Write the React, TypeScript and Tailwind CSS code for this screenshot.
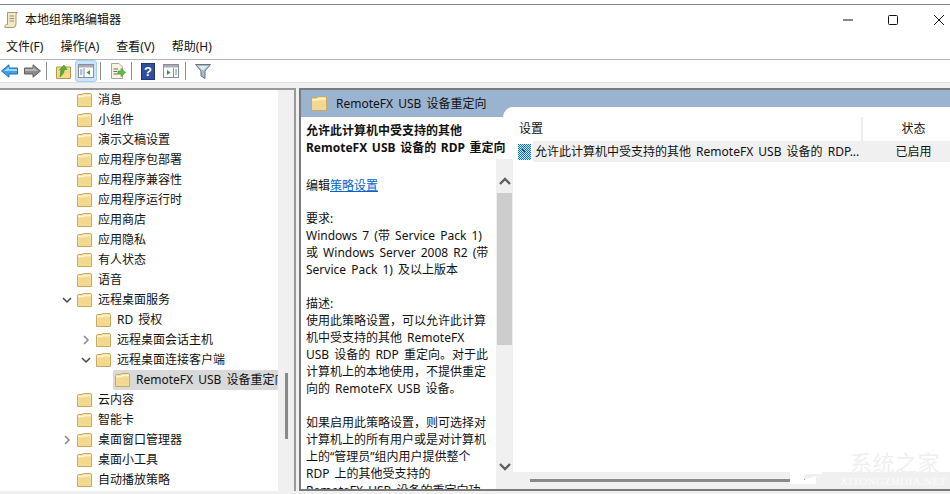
import React from "react";

const font = { fontFamily: '"Noto Sans", "Noto Sans CJK SC", sans-serif' };

function Folder({ className = "w-[15px] h-[14px]" }: { className?: string }) {
  return (
    <svg viewBox="0 0 15 14" className={"shrink-0 " + className}>
      <path d="M0.5 2.5 Q0.5 1.5 1.5 1.5 H5 L6.5 0.5 H13 Q14.5 0.5 14.5 2 V13.5 H0.5 Z" fill="#f5dd98" stroke="#c8a963" />
      <path d="M1 3.5 H6 L7.5 2.5 H14" fill="none" stroke="#fff6d6" strokeWidth="1.4" />
      <path d="M2 13 V5 H13 V13 Z" fill="#f3d88e" />
    </svg>
  );
}

function Chevron({ dir, color = "#555" }: { dir: "down" | "right"; color?: string }) {
  return (
    <svg viewBox="0 0 10 10" className="w-[10px] h-[10px]">
      <path
        d={dir === "down" ? "M1 3 L5 7 L9 3" : "M3 1 L7 5 L3 9"}
        fill="none"
        stroke={color}
        strokeWidth="1.5"
      />
    </svg>
  );
}

type Row = { t: string; indent: 0 | 1 | 2; chev?: "down" | "right"; sel?: boolean };
const rows: Row[] = [
  { t: "消息", indent: 0 },
  { t: "小组件", indent: 0 },
  { t: "演示文稿设置", indent: 0 },
  { t: "应用程序包部署", indent: 0 },
  { t: "应用程序兼容性", indent: 0 },
  { t: "应用程序运行时", indent: 0 },
  { t: "应用商店", indent: 0 },
  { t: "应用隐私", indent: 0 },
  { t: "有人状态", indent: 0 },
  { t: "语音", indent: 0 },
  { t: "远程桌面服务", indent: 0, chev: "down" },
  { t: "RD 授权", indent: 1 },
  { t: "远程桌面会话主机", indent: 1, chev: "right" },
  { t: "远程桌面连接客户端", indent: 1, chev: "down" },
  { t: "RemoteFX USB 设备重定向", indent: 2, sel: true },
  { t: "云内容", indent: 0 },
  { t: "智能卡", indent: 0 },
  { t: "桌面窗口管理器", indent: 0, chev: "right" },
  { t: "桌面小工具", indent: 0 },
  { t: "自动播放策略", indent: 0 },
];

const indentClass = { 0: "w-[58px]", 1: "w-[77px]", 2: "w-[96px]" };

function Sep() {
  return <div className="w-px h-[18px] bg-[#8e8e8e]" />;
}

function WindowIcon({ kind }: { kind: "tree" | "action" }) {
  return (
    <svg viewBox="0 0 16 14" className="w-[16px] h-[14px]">
      <rect x="0.5" y="0.5" width="15" height="13" fill="#fff" stroke="#8a8f96" />
      <rect x="1" y="1" width="14" height="2.5" fill="#a9adb3" />
      {kind === "tree" ? (
        <>
          <path d="M6 4 V13" stroke="#8a8f96" />
          <path d="M2 6 H4.5 M2 8 H4.5 M2 10 H4.5" stroke="#5a8ac0" />
          <path d="M12 6 L8.5 8.5 L12 11 Z" fill="#2f9e44" />
        </>
      ) : (
        <>
          <path d="M10.5 4 V13" stroke="#8a8f96" />
          <path d="M12 6 H14 M12 8 H14 M12 10 H14" stroke="#5a8ac0" />
          <path d="M4 6 L7.5 8.5 L4 11 Z" fill="#2f9e44" />
        </>
      )}
    </svg>
  );
}

function Toolbar() {
  return (
    <div className="h-[22px] flex items-center shrink-0 pl-[1px]">
      <svg viewBox="0 0 17 14" className="w-[17px] h-[14px]">
        <path d="M0.5 7 L8 0.8 V4 H16.5 V10 H8 V13.2 Z" fill="#3fa0ea" stroke="#1f6fb8" strokeLinejoin="round" />
        <path d="M3 7 L8 3 V5 H16 V7 Z" fill="#9fd6fb" />
      </svg>
      <svg viewBox="0 0 17 14" className="w-[17px] h-[14px] ml-[6px]">
        <path d="M16.5 7 L9 0.8 V4 H0.5 V10 H9 V13.2 Z" fill="#8a8a8a" stroke="#5f5f5f" strokeLinejoin="round" />
        <path d="M14 7 L9 3 V5 H1 V7 Z" fill="#b5b5b5" />
      </svg>
      <div className="ml-[5px]"><Sep /></div>
      <svg viewBox="0 0 15 15" className="w-[15px] h-[15px] ml-[9px]">
        <path d="M0.5 3 H14.5 V14.5 H0.5 Z" fill="#f3d88e" stroke="#b8974f" />
        <path d="M4 13 L5 6 L3.5 6 L8 1 L11 5.5 L8.5 5.5 L7.5 9 Z" fill="#55b233" stroke="#2f7d1a" strokeWidth="0.5" />
      </svg>
      <div className="ml-[4px] w-[22px] h-[22px] rounded-[3px] bg-[#cce4f7] border border-[#a3d0f2] flex items-center justify-center">
        <WindowIcon kind="tree" />
      </div>
      <div className="ml-[3px]"><Sep /></div>
      <svg viewBox="0 0 16 16" className="w-[16px] h-[16px] ml-[9px]">
        <path d="M1.5 0.5 H9 L12.5 4 V15.5 H1.5 Z" fill="#f7f4e6" stroke="#a8a69a" />
        <path d="M3.5 6 H8 M3.5 8.5 H7 M3.5 11 H8" stroke="#666" />
        <path d="M8 8 H11 V5.5 L15.5 9.5 L11 13.5 V11 H8 Z" fill="#5fc13c" stroke="#3c8d22" strokeWidth="0.6" />
      </svg>
      <div className="ml-[5px]"><Sep /></div>
      <div
        className="ml-[9px] w-[14px] h-[17px] bg-[#2f4f9e] border border-[#1f3675] flex items-center justify-center text-white text-[13px] font-bold leading-none"
        style={{ fontFamily: '"Liberation Sans", sans-serif' }}
      >
        ?
      </div>
      <div className="ml-[8px]"><WindowIcon kind="action" /></div>
      <div className="ml-[6px]"><Sep /></div>
      <svg viewBox="0 0 16 15" className="w-[16px] h-[15px] ml-[9px]">
        <path d="M0.5 0.5 H15.5 L10 7 V14.5 L6 12 V7 Z" fill="#a9bcc9" stroke="#65757f" />
        <path d="M3 2 H13 L9 6 H7 Z" fill="#dfe8ee" />
      </svg>
    </div>
  );
}

function Tree() {
  return (
    <div className="w-[296px] shrink-0 flex border-t-2 border-r-2 border-[#9a9a9a] h-[403px] bg-white">
      <div className="w-[278px] overflow-hidden">
        {rows.map((r) => (
          <div key={r.t} className="h-[20px] flex items-stretch">
            <div className={indentClass[r.indent] + " shrink-0"} />
            <div className="w-[17px] shrink-0 flex items-center justify-center">
              {r.chev && <Chevron dir={r.chev} color={r.chev === "down" ? "#444" : "#888"} />}
            </div>
            <div
              className={
                "flex-1 min-w-0 flex items-center gap-[6px] px-[2px] rounded-l-[2px] overflow-hidden whitespace-nowrap " +
                (r.sel ? "bg-[#d9d9d9]" : "")
              }
            >
              <Folder />
              <span>{r.t}</span>
            </div>
          </div>
        ))}
      </div>
      <div className="w-[16px] bg-[#f0f0f0] pt-[283px] flex justify-center">
        <div className="w-[3px] h-[66px] bg-[#8a8a8a]" />
      </div>
    </div>
  );
}

function Line({ children }: { children?: React.ReactNode }) {
  return <div className="h-[17px] whitespace-nowrap">{children}</div>;
}

function Description() {
  return (
    <div className="w-[212px] shrink-0 flex flex-col overflow-hidden">
      <div className="h-[42px] shrink-0 pl-[5px] pt-[5px] font-bold leading-[17px] whitespace-nowrap [word-spacing:1.5px]">
        <div>允许此计算机中受支持的其他</div>
        <div>RemoteFX USB 设备的 RDP 重定向</div>
      </div>
      <div className="flex-1 flex min-h-0">
        <div className="w-[195px] pl-[5px] pt-[18px] overflow-hidden">
          <Line>
            编辑<span className="text-[#0066cc] underline">策略设置</span>
          </Line>
          <div className="h-[16px]" />
          <Line>要求:</Line>
          <Line>Windows 7 (带 Service Pack 1)</Line>
          <Line>或 Windows Server 2008 R2 (带</Line>
          <Line>Service Pack 1) 及以上版本</Line>
          <Line />
          <Line>描述:</Line>
          <Line>使用此策略设置，可以允许此计算</Line>
          <Line>机中受支持的其他 RemoteFX</Line>
          <Line>USB 设备的 RDP 重定向。对于此</Line>
          <Line>计算机上的本地使用，不提供重定</Line>
          <Line>向的 RemoteFX USB 设备。</Line>
          <Line />
          <Line>如果启用此策略设置，则可选择对</Line>
          <Line>计算机上的所有用户或是对计算机</Line>
          <Line>上的“管理员”组内用户提供整个</Line>
          <Line>RDP 上的其他受支持的</Line>
          <Line>RemoteFX USB 设备的重定向功</Line>
        </div>
        <div className="w-[17px] bg-[#f0f0f0] flex flex-col items-center shrink-0">
          <div className="h-[34px] w-full flex items-center justify-center pt-[9px]">
            <svg viewBox="0 0 12 8" className="w-[12px] h-[8px]"><path d="M1 7 L6 2 L11 7" fill="none" stroke="#606060" strokeWidth="2.4" /></svg>
          </div>
          <div className="w-[15px] h-[152px] bg-[#cdcdcd]" />
          <div className="flex-1 flex items-end pb-[18px]">
            <svg viewBox="0 0 12 8" className="w-[12px] h-[8px]"><path d="M1 1 L6 6 L11 1" fill="none" stroke="#606060" strokeWidth="2.4" /></svg>
          </div>
        </div>
      </div>
    </div>
  );
}

function PolicyList() {
  return (
    <div className="flex-1 min-w-0 flex flex-col">
      <div className="h-[24px] flex shrink-0">
        <div className="w-[350px] pl-[6px] leading-[24px] border-r-2 border-[#ececec]">设置</div>
        <div className="flex-1 text-center pl-[14px] leading-[24px]">状态</div>
      </div>
      <div className="h-[21px] flex items-center shrink-0 pl-[5px]">
        <svg viewBox="0 0 13 16" className="w-[13px] h-[16px] shrink-0">
          <defs>
            <pattern id="dots" width="2" height="2" patternUnits="userSpaceOnUse">
              <rect width="2" height="2" fill="#cfe6fa" />
              <rect width="1" height="1" fill="#0a6fd0" />
              <rect x="1" y="1" width="1" height="1" fill="#0a6fd0" />
            </pattern>
          </defs>
          <rect width="13" height="16" fill="url(#dots)" />
          <path d="M4 5 L7 8 L4 11" fill="none" stroke="#0b4f96" strokeWidth="1" />
        </svg>
        <div className="flex-1 h-full bg-[#f0f0f0] ml-[2px] flex items-center pl-[2px] whitespace-nowrap">
          <span className="w-[345px] shrink-0 overflow-hidden">允许此计算机中受支持的其他 RemoteFX USB 设备的 RDP...</span>
          <span className="flex-1 text-center pr-[3px]">已启用</span>
        </div>
      </div>
      <div className="flex-1" />
      <div className="h-[17px] bg-[#f0f0f0] shrink-0 pl-[17px] pt-[7px]">
        <div className="w-[275px] h-[3px] bg-[#8a8a8a]" />
      </div>
    </div>
  );
}

export default function App() {
  return (
    <div
      className="relative w-[950px] h-[494px] overflow-hidden bg-[#f0f0f0] flex flex-col text-[12px] text-[#111] [word-spacing:2px]"
      style={font}
    >
      <div className="h-[4px] bg-white shrink-0" />
      <div className="h-[55px] bg-white border-t border-[#7f8a96] shrink-0 flex flex-col">
        <div className="h-[30px] flex items-center pl-[4px] shrink-0">
          <svg viewBox="0 0 14 16" className="w-[14px] h-[16px]">
            <path d="M3.5 0.5 H13.5 Q12 1.5 12 3 V12 Q12 15.5 9 15.5 H1 Q0 13 2.5 12.5 H3.5 Z" fill="#f3e8c6" stroke="#a59a74" />
            <path d="M5.5 4 H10 M5.5 6.5 H10 M5.5 9 H10" stroke="#9a9070" />
          </svg>
          <span className="ml-[7px]">本地组策略编辑器</span>
          <div className="ml-auto flex items-center">
            <svg viewBox="0 0 10 10" className="w-[10px] h-[10px]"><path d="M0 5 H10" stroke="#111" /></svg>
            <svg viewBox="0 0 10 10" className="w-[10px] h-[10px] ml-[35px]"><rect x="0.5" y="0.5" width="9" height="9" rx="1" fill="none" stroke="#111" /></svg>
            <svg viewBox="0 0 10 10" className="w-[10px] h-[10px] ml-[36px] mr-[6px]"><path d="M0 0 L10 10 M10 0 L0 10" stroke="#111" /></svg>
          </div>
        </div>
        <div className="flex-1 flex items-center pl-[6px] gap-[17px]">
          <span>文件(F)</span>
          <span>操作(A)</span>
          <span>查看(V)</span>
          <span>帮助(H)</span>
        </div>
      </div>
      <div className="h-px bg-[#b4b4b4] shrink-0" />
      <div className="bg-white shrink-0"><Toolbar /></div>
      <div className="h-[6px] shrink-0 bg-[#f0f0f0] border-t border-[#e0e0e0]" />
      <div className="flex-1 min-h-0 flex items-start">
        <Tree />
        <div className="ml-[3px] flex-1 min-w-0 h-[403px] border-t-2 border-l-2 border-b-2 border-[#7a7a7a] flex flex-col bg-white">
          <div className="h-[27px] bg-[#9ab3d0] flex items-end shrink-0">
            <div className="w-[202px] self-start h-[17px] pl-[10px] flex items-center mt-[5px] gap-[9px] whitespace-nowrap">
              <Folder className="w-[16px] h-[15px]" />
              <span>RemoteFX USB 设备重定向</span>
            </div>
            <div className="flex-1 h-[10px] bg-white rounded-tl-[10px]" />
          </div>
          <div className="flex-1 min-h-0 flex">
            <Description />
            <PolicyList />
          </div>
        </div>
      </div>
      <svg viewBox="0 0 64 44" className="absolute left-[776px] top-[440px] w-[64px] h-[44px]">
        <path d="M0 26 L34 0 L62 20 L50 20 L34 9 L24 17 L24 44 L14 44 L14 22 Z" fill="#ffffff" />
        <path d="M24 30 H42 V26 H30 V22 H46 V34 H28 V40 L40 36 V44 H24 Z" fill="#ffffff" />
      </svg>
      <div className="absolute left-[850px] top-[450px] text-[22px] leading-[24px] font-normal tracking-[0.5px] text-[#f0f0f0] whitespace-nowrap">系统之家</div>
      <div className="absolute left-[840px] top-[475px] text-[11px] leading-[12px] tracking-[0.4px] text-[#fbfbfb] whitespace-nowrap" style={{ fontFamily: '"Liberation Serif", serif' }}>XITONGZHIJIA.NET</div>
    </div>
  );
}
